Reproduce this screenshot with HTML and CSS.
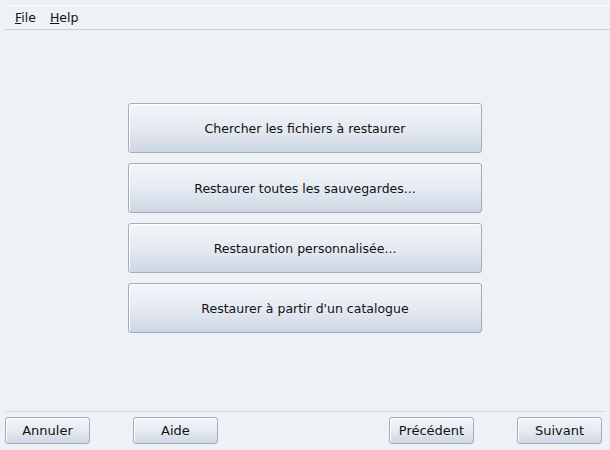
FILE: index.html
```html
<!DOCTYPE html>
<html lang="fr">
  <head>
    <meta charset="UTF-8" />
    <title>Restauration</title>
    <link rel="stylesheet" href="styles.css">
  </head>
  <body>
    <div class="window">
      <div class="menubar">
        <span class="menu"><u>F</u>ile</span>
        <span class="menu"><u>H</u>elp</span>
      </div>
      <div class="choices">
        <button class="big">Chercher les fichiers à restaurer</button>
        <button class="big">Restaurer toutes les sauvegardes...</button>
        <button class="big">Restauration personnalisée...</button>
        <button class="big">Restaurer à partir d'un catalogue</button>
      </div>
      <div class="footer">
        <div class="group">
          <button class="small">Annuler</button>
          <button class="small">Aide</button>
        </div>
        <div class="group">
          <button class="small">Précédent</button>
          <button class="small">Suivant</button>
        </div>
      </div>
    </div>
  </body>
</html>
```

FILE: styles.css
```css
* {
  margin: 0;
  padding: 0;
  box-sizing: border-box;
}
body {
  background: #eef1f6;
  font-family: "DejaVu Sans", sans-serif;
  font-size: 12.5px;
  color: #111;
}
.window {
  height: 450px;
  display: flex;
  flex-direction: column;
  padding-top: 5px;
}
.menubar {
  margin-left: 5px;
  height: 25px;
  border-top: 1px solid #ffffff;
  border-bottom: 1px solid #c9ced7;
  display: flex;
  align-items: center;
  gap: 14px;
  padding-left: 10px;
  padding-bottom: 1px;
}
.menu u {
  text-decoration-thickness: 1px;
}
.choices {
  flex: 1;
  display: flex;
  flex-direction: column;
  align-items: center;
  gap: 10px;
  padding-top: 73px;
  border-bottom: 1px solid #d3d7de;
  margin-left: 5px;
  margin-right: 5px;
}
button {
  font-family: "DejaVu Sans", sans-serif;
  font-size: 12.5px;
  color: #111;
  border: 1px solid #a3acba;
  border-radius: 3px;
  background: linear-gradient(#f4f6fa, #e4e9f1 55%, #cdd6e3);
  box-shadow: inset 1px 1px 0 #ffffff;
}
.big {
  width: 354px;
  height: 50px;
}
.footer {
  height: 38px;
  display: flex;
  justify-content: space-between;
  padding: 5px 8px 6px 5px;
}
.group {
  display: flex;
  gap: 43px;
}
.small {
  width: 85px;
  height: 27px;
  font-size: 13px;
}
```
